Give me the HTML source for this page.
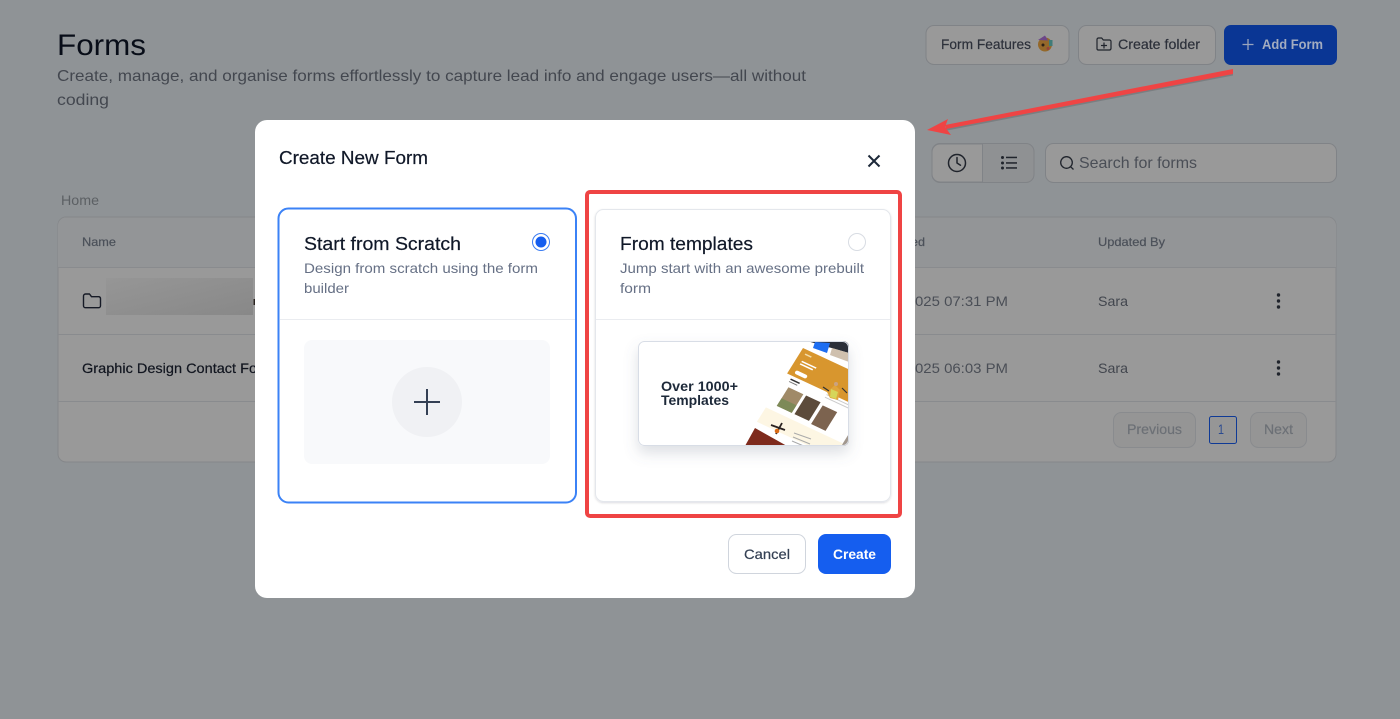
<!DOCTYPE html>
<html lang="en"><head><meta charset="utf-8"><title>Forms</title>
<style>
html,body{margin:0;padding:0;width:1400px;height:719px;overflow:hidden;background:#8f9396}
svg{display:block}
text{font-family:"Liberation Sans",sans-serif;white-space:pre}
.m{stroke-width:.2;stroke:currentColor}
</style></head><body>
<svg xmlns="http://www.w3.org/2000/svg" width="1400" height="719" viewBox="0 0 1400 719">
<defs>
<clipPath id="thumb"><rect x="638" y="341" width="211" height="105" rx="6"/></clipPath>
<filter id="ts" x="-20%" y="-20%" width="140%" height="160%"><feDropShadow dx="0" dy="7" stdDeviation="7" flood-color="#667085" flood-opacity=".22"/></filter>
<filter id="cs" x="-5%" y="-5%" width="110%" height="110%"><feDropShadow dx="0" dy="1" stdDeviation="1" flood-color="#101828" flood-opacity=".14"/></filter>
<filter id="bl"><feGaussianBlur stdDeviation=".35"/></filter>
<linearGradient id="gb" x1="0" y1="0" x2="1" y2="1"><stop offset="0" stop-color="#969696"/><stop offset="1" stop-color="#888888"/></linearGradient>
</defs>

<!-- page behind overlay -->
<rect width="1400" height="719" fill="#8f9396"/>
<text lengthAdjust="spacingAndGlyphs" x="57" y="55" font-size="30" fill="#080d18" textLength="89">Forms</text>
<text lengthAdjust="spacingAndGlyphs" x="57" y="81" font-size="16" fill="#43474f" textLength="749">Create, manage, and organise forms effortlessly to capture lead info and engage users—all without</text>
<text lengthAdjust="spacingAndGlyphs" x="57" y="105" font-size="16" fill="#43474f" textLength="52">coding</text>

<rect x="926" y="25.5" width="143" height="39" rx="8" fill="#999999" stroke="#808387"/>
<text class="m" lengthAdjust="spacingAndGlyphs" x="941" y="49" font-size="14" fill="#2c303a" color="#2c303a" textLength="90">Form Features</text>
<g><circle cx="1045" cy="44.500" r="7" fill="#94682a"/><path d="M1038 40l7-4.500 3 5z" fill="#6d4688"/><rect x="1049" y="40" width="3.500" height="6" fill="#3f7b78"/><circle cx="1043" cy="45" r="1.500" fill="#2e2118"/><circle cx="1048" cy="48.500" r="1.500" fill="#96403c"/></g>

<rect x="1078.500" y="25.500" width="137" height="39" rx="8" fill="#999999" stroke="#808387"/>
<g fill="none" stroke="#20242c" stroke-width="1.200" stroke-linejoin="round" stroke-linecap="round"><path d="M1097 49V39.500a1.500 1.500 0 0 1 1.500-1.500h3.200l1.600 2h6.200a1.500 1.500 0 0 1 1.500 1.500v7a1.700 1.700 0 0 1-1.500 1.500h-11A1.500 1.500 0 0 1 1097 49z"/><path d="M1104 43v5M1101.500 45.500h5"/></g>
<text class="m" lengthAdjust="spacingAndGlyphs" x="1118" y="49" font-size="14" fill="#2c303a" color="#2c303a" textLength="82">Create folder</text>

<rect x="1224" y="25" width="113" height="40" rx="7" fill="#0a3694"/>
<path d="M1248 39v11M1242.500 44.500h11" stroke="#9aa5bd" stroke-width="1.300" fill="none"/>
<text lengthAdjust="spacingAndGlyphs" x="1262" y="49" font-size="14" font-weight="700" fill="#a3acc0" textLength="61">Add Form</text>

<!-- arrow -->
<path d="M1233 72L945 128L947 130.500L1233 75.500Z" fill="#5a5e62" opacity=".4"/>
<path d="M1233 69L945 125L946 129L1233 74Z" fill="#ef4444"/>
<path d="M927 130L948 119L945 127L951 135Z" fill="#ef4444"/>

<!-- toolbar -->
<rect x="932" y="143.500" width="102" height="39" rx="8" fill="#8f9193" stroke="#808387"/>
<path d="M940 144h42.500v38H940a8 8 0 0 1-8-8v-22a8 8 0 0 1 8-8z" fill="#999999" stroke="#808387"/>
<circle cx="957" cy="163" r="8.500" fill="none" stroke="#20242c" stroke-width="1.500"/>
<path d="M957 157.500v5.500l3.500 2.200" fill="none" stroke="#20242c" stroke-width="1.500" stroke-linecap="round" stroke-linejoin="round"/>
<g fill="#20242c"><circle cx="1002.500" cy="157.500" r="1.500"/><circle cx="1002.500" cy="163" r="1.500"/><circle cx="1002.500" cy="168" r="1.500"/><rect x="1006" y="156.700" width="11" height="1.500"/><rect x="1006" y="162.200" width="11" height="1.500"/><rect x="1006" y="167.200" width="11" height="1.500"/></g>

<rect x="1045.500" y="143.500" width="291" height="39" rx="8" fill="#999999" stroke="#808387"/>
<circle cx="1066.500" cy="162.500" r="5.800" fill="none" stroke="#20242c" stroke-width="1.300"/>
<path d="M1070.700 166.800L1073.500 169.500" stroke="#20242c" stroke-width="1.300" fill="none"/>
<text lengthAdjust="spacingAndGlyphs" x="1079" y="168" font-size="16" fill="#4a4e56" textLength="118">Search for forms</text>

<text lengthAdjust="spacingAndGlyphs" x="61" y="205" font-size="14" fill="#5c6064" textLength="38">Home</text>

<!-- table -->
<rect x="58" y="217" width="1278" height="245" rx="8" fill="#999999" stroke="#85878a"/>
<rect x="58" y="217.500" width="1278" height="49.500" fill="#939597" style="clip-path:inset(0 round 8px 8px 0 0)"/>
<g fill="#898b8e"><rect x="58" y="267" width="1278" height="1"/><rect x="58" y="334" width="1278" height="1"/><rect x="58" y="401" width="1278" height="1"/></g>
<text class="m" lengthAdjust="spacingAndGlyphs" x="82" y="246" font-size="12" fill="#4b5059" color="#4b5059" textLength="34">Name</text>
<text class="m" lengthAdjust="spacingAndGlyphs" x="911" y="246" font-size="12" fill="#4b5059" color="#4b5059" textLength="14">ed</text>
<text class="m" lengthAdjust="spacingAndGlyphs" x="1098" y="246" font-size="12" fill="#4b5059" color="#4b5059" textLength="67">Updated By</text>

<path d="M83.500 305.500V296a2 2 0 0 1 2-2h4l2 2.700h7.500a2 2 0 0 1 1.500 2v7a2 2 0 0 1-2 2h-13a2 2 0 0 1-2-2z" fill="none" stroke="#161a26" stroke-width="1.400" stroke-linejoin="round"/>
<rect x="106" y="278" width="147" height="37" fill="url(#gb)"/>
<rect x="253.500" y="299" width="2" height="6" fill="#2a2420"/>
<text class="m" lengthAdjust="spacingAndGlyphs" x="82" y="373" font-size="14" fill="#11151f" color="#11151f" textLength="192">Graphic Design Contact Form</text>

<text lengthAdjust="spacingAndGlyphs" x="915" y="306" font-size="14" fill="#4a4e56" textLength="93">025 07:31 PM</text>
<text lengthAdjust="spacingAndGlyphs" x="915" y="373" font-size="14" fill="#4a4e56" textLength="93">025 06:03 PM</text>
<text lengthAdjust="spacingAndGlyphs" x="1098" y="306" font-size="14" fill="#42464e" textLength="30">Sara</text>
<text lengthAdjust="spacingAndGlyphs" x="1098" y="373" font-size="14" fill="#42464e" textLength="30">Sara</text>
<g fill="#20242c"><circle cx="1278.500" cy="295" r="1.700"/><circle cx="1278.500" cy="301" r="1.700"/><circle cx="1278.500" cy="307" r="1.700"/><circle cx="1278.500" cy="362" r="1.700"/><circle cx="1278.500" cy="368" r="1.700"/><circle cx="1278.500" cy="374" r="1.700"/></g>

<rect x="1113.500" y="412.500" width="82" height="35" rx="8" fill="#959595" stroke="#898b8e"/>
<text class="m" lengthAdjust="spacingAndGlyphs" x="1127" y="434" font-size="14" fill="#6c7076" color="#6c7076" textLength="55">Previous</text>
<rect x="1209.500" y="416.500" width="27" height="27" rx="2" fill="#969696" stroke="#0f3a96"/>
<text lengthAdjust="spacingAndGlyphs" x="1218" y="434" font-size="14" fill="#2a4a90" textLength="6">1</text>
<rect x="1250.500" y="412.500" width="56" height="35" rx="8" fill="#959595" stroke="#898b8e"/>
<text class="m" lengthAdjust="spacingAndGlyphs" x="1264" y="434" font-size="14" fill="#6c7076" color="#6c7076" textLength="29">Next</text>

<!-- modal -->
<rect x="255" y="120" width="660" height="478" rx="12" fill="#fff"/>
<text class="m" lengthAdjust="spacingAndGlyphs" x="279" y="164" font-size="18" fill="#101828" color="#101828" textLength="149">Create New Form</text>
<path d="M868.500 155.500L879.500 166.500M879.500 155.500L868.500 166.500" stroke="#1d2939" stroke-width="2" fill="none"/>

<!-- left card -->
<rect x="278.500" y="208.500" width="297.500" height="294" rx="10" fill="#fff" stroke="#3b82f6" stroke-width="2"/>
<rect x="280" y="319" width="295" height="1" fill="#eaecf0"/>
<text class="m" lengthAdjust="spacingAndGlyphs" x="304" y="250" font-size="18" fill="#101828" color="#101828" textLength="157">Start from Scratch</text>
<text lengthAdjust="spacingAndGlyphs" x="304" y="273" font-size="14" fill="#667085" textLength="234">Design from scratch using the form</text>
<text lengthAdjust="spacingAndGlyphs" x="304" y="293" font-size="14" fill="#667085" textLength="45">builder</text>
<circle cx="541" cy="242" r="8.500" fill="#fff" stroke="#3b7cf2" stroke-width="1"/>
<circle cx="541" cy="242" r="5.500" fill="#155eef"/>
<rect x="304" y="340" width="246" height="124" rx="8" fill="#f8f9fb"/>
<circle cx="427" cy="402" r="35" fill="#f0f1f4"/>
<path d="M427 389v26M414 402h26" stroke="#344054" stroke-width="2" fill="none"/>

<!-- right card -->
<rect x="595.500" y="209.500" width="295" height="292" rx="8" fill="#fff" stroke="#e4e7ec" filter="url(#cs)"/>
<rect x="596" y="319" width="294" height="1" fill="#eaecf0"/>
<text class="m" lengthAdjust="spacingAndGlyphs" x="620" y="250" font-size="18" fill="#101828" color="#101828" textLength="133">From templates</text>
<text lengthAdjust="spacingAndGlyphs" x="620" y="273" font-size="14" fill="#667085" textLength="244">Jump start with an awesome prebuilt</text>
<text lengthAdjust="spacingAndGlyphs" x="620" y="293" font-size="14" fill="#667085" textLength="31">form</text>
<circle cx="857" cy="242" r="8.500" fill="#fff" stroke="#d8dce3"/>

<!-- thumbnail -->
<rect x="638" y="341" width="211" height="105" rx="6" fill="#fff" filter="url(#ts)"/>
<g clip-path="url(#thumb)">
<rect x="638" y="341" width="211" height="105" fill="#fff"/>
<g filter="url(#bl)">
<polygon points="807,341 849,341 849,353" fill="#2b2f38"/>
<polygon points="815,342 830,343 827,353 813,348" fill="#1e6df2"/>
<polygon points="832,348 849,353 849,362 830,355" fill="#cfc0ae"/>
<polygon points="848,420 833,446 849,446" fill="#eef0f4"/>
<polygon points="843,431 849,428 849,446 842,446" fill="#a2988f"/>
<g transform="matrix(.906 .423 -.53 .848 803 348)">
<rect x="0" y="0" width="85" height="87" fill="#fff"/>
<rect x="0" y="0" width="85" height="30" fill="#d8962f"/>
<rect x="5" y="4" width="7" height="1.500" fill="#f3dca8"/>
<rect x="6" y="12" width="16" height="1.500" fill="#fff"/><rect x="6" y="15" width="14" height="1.500" fill="#fff"/>
<rect x="6" y="23" width="13" height="4" rx="2" fill="#fff"/>
<rect x="6" y="33" width="10" height="1.500" fill="#333"/><rect x="6" y="36" width="9" height="1" fill="#777"/>
<rect x="0" y="70" width="85" height="17" fill="#fdf6e3"/>
<rect x="8.500" y="42" width="16.500" height="22" fill="#a08a68"/>
<rect x="8.500" y="55" width="16.500" height="9" fill="#7d8a58"/>
<rect x="28" y="42" width="16" height="22" fill="#5c4b3b"/>
<rect x="47.500" y="44" width="16" height="22" fill="#7c6450"/>
<rect x="45" y="32" width="30" height="1" fill="#ccc"/><rect x="45" y="35" width="30" height="1" fill="#ccc"/>
</g>
<polygon points="755,428 787,446 745,446" fill="#7e2a1a"/>
<polygon points="835,385 840,390 838,400 830,398 827,392" fill="#e0a53c"/>
<path d="M831 389l-1 8 6 2 2-7z" fill="#d6d65a"/><circle cx="836" cy="384" r="2" fill="#caa281"/>
<path d="M823 387l6 4M842 388l5 5" stroke="#333" stroke-width="1.200"/>
<path d="M771 425l14 5M776 434l6-11" stroke="#2a2420" stroke-width="1.800"/><circle cx="777" cy="431" r="2.300" fill="#d96a14"/>
<path d="M794 433l17 6M793 437l17 7M792 441l14 6" stroke="#aaa" stroke-width="1"/>
</g>
</g>
<rect x="638.500" y="341.500" width="210" height="104" rx="6" fill="none" stroke="#d8dde6"/>
<text lengthAdjust="spacingAndGlyphs" x="661" y="391" font-size="13.500" font-weight="700" fill="#1d2939" textLength="77">Over 1000+</text>
<text lengthAdjust="spacingAndGlyphs" x="661" y="405" font-size="13.500" font-weight="700" fill="#1d2939" textLength="68">Templates</text>

<!-- red highlight -->
<rect x="587" y="192" width="313" height="324" rx="3" fill="none" stroke="#ef4444" stroke-width="4"/>

<!-- footer buttons -->
<rect x="728.500" y="534.500" width="77" height="39" rx="8" fill="#fff" stroke="#d0d5dd"/>
<text class="m" lengthAdjust="spacingAndGlyphs" x="744" y="559" font-size="14" fill="#344054" color="#344054" textLength="46">Cancel</text>
<rect x="818" y="534" width="73" height="40" rx="8" fill="#155eef"/>
<text lengthAdjust="spacingAndGlyphs" x="833" y="559" font-size="14" font-weight="700" fill="#fff" textLength="43">Create</text>
</svg>
</body></html>
